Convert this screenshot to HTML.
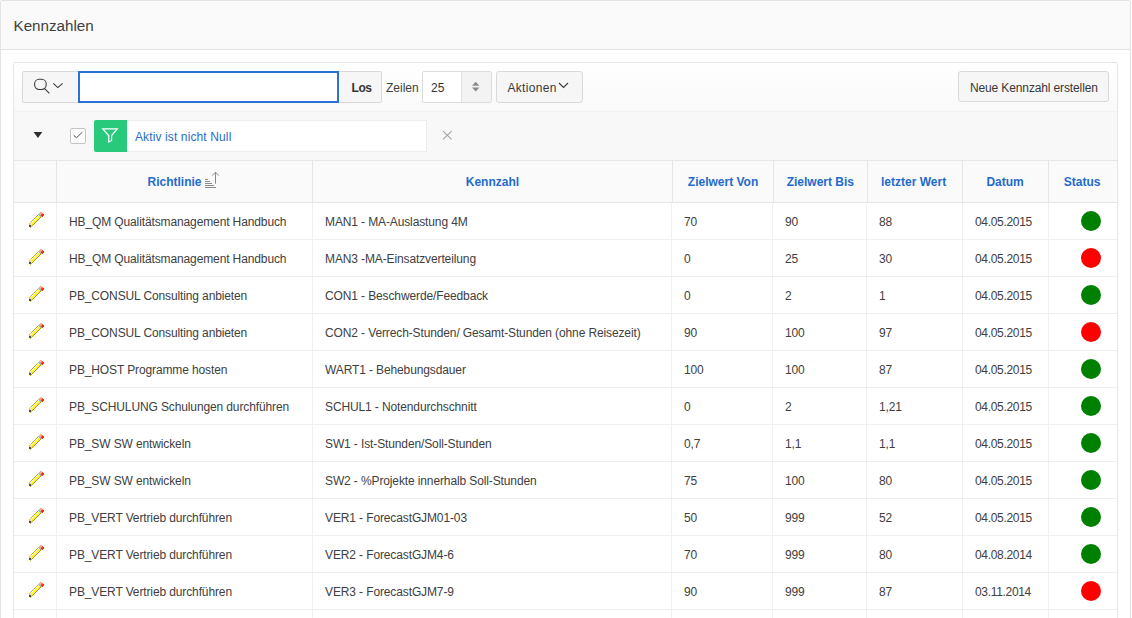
<!DOCTYPE html>
<html><head><meta charset="utf-8"><style>
html,body{margin:0;padding:0;}
body{width:1132px;height:618px;overflow:hidden;background:#fff;position:relative;font-family:"Liberation Sans",sans-serif;color:#404040;font-size:12px;}
.a{position:absolute;}
.t{position:absolute;white-space:nowrap;line-height:14px;}
.outer{position:absolute;left:0;top:0;width:1131px;height:700px;box-sizing:border-box;border:1px solid #e3e3e3;background:#fff;border-radius:2px;}
.rhdr{position:absolute;left:1px;top:1px;width:1129px;height:48px;background:#fafafa;border-bottom:1px solid #e3e3e3;}
.irr{position:absolute;left:13px;top:62px;width:1105px;height:700px;box-sizing:border-box;border:1px solid #e6e6e6;border-radius:2px;}
.tb{position:absolute;left:14px;top:63px;width:1103px;height:48px;background:linear-gradient(#fff,#f9f9f9);border-bottom:1px solid #f2f2f2;}
.fr{position:absolute;left:14px;top:112px;width:1103px;height:48px;background:#f8f8f8;}
.th{position:absolute;left:14px;top:160px;width:1103px;height:41px;background:#fafafa;border-top:1px solid #e6e6e6;border-bottom:1px solid #e6e6e6;}
.btn{position:absolute;box-sizing:border-box;height:32px;top:71px;background:#f6f6f6;border:1px solid #d9d9d9;border-radius:2px;}
.hl{position:absolute;font-weight:bold;color:#1f6bcc;white-space:nowrap;line-height:14px;top:175px;}
.row{position:absolute;left:14px;width:1103px;height:36px;border-bottom:1px solid #efefef;background:#fff;}
.vs{position:absolute;width:1px;background:#f0f0f0;}
.hvs{position:absolute;width:1px;background:#e6e6e6;top:161px;height:41px;}
.dot{position:absolute;width:20px;height:20px;border-radius:50%;}
.pen{position:absolute;left:29px;}
</style></head><body>
<svg width="0" height="0" style="position:absolute"><defs><symbol id="pen" viewBox="0 0 16 16"><rect x="11" y="0" width="1" height="1" fill="#f0a890"/><rect x="12" y="0" width="1" height="1" fill="#f8b098"/><rect x="10" y="1" width="1" height="1" fill="#f0a890"/><rect x="11" y="1" width="1" height="1" fill="#f8b098"/><rect x="12" y="1" width="1" height="1" fill="#f4a088"/><rect x="13" y="1" width="1" height="1" fill="#fa6848"/><rect x="9" y="2" width="1" height="1" fill="#a8b890"/><rect x="10" y="2" width="1" height="1" fill="#b0c4d0"/><rect x="11" y="2" width="1" height="1" fill="#f4a088"/><rect x="12" y="2" width="1" height="1" fill="#fa6848"/><rect x="13" y="2" width="1" height="1" fill="#ff2800"/><rect x="14" y="2" width="1" height="1" fill="#ff2000"/><rect x="8" y="3" width="1" height="1" fill="#b4b410"/><rect x="9" y="3" width="1" height="1" fill="#ffffe0"/><rect x="10" y="3" width="1" height="1" fill="#a0b8c8"/><rect x="11" y="3" width="1" height="1" fill="#98b0c0"/><rect x="12" y="3" width="1" height="1" fill="#ff2800"/><rect x="13" y="3" width="1" height="1" fill="#ff2000"/><rect x="14" y="3" width="1" height="1" fill="#f84020"/><rect x="7" y="4" width="1" height="1" fill="#b4b410"/><rect x="8" y="4" width="1" height="1" fill="#ffffe0"/><rect x="9" y="4" width="1" height="1" fill="#ffff48"/><rect x="10" y="4" width="1" height="1" fill="#fcf820"/><rect x="11" y="4" width="1" height="1" fill="#98b0a8"/><rect x="12" y="4" width="1" height="1" fill="#a0b070"/><rect x="13" y="4" width="1" height="1" fill="#f84020"/><rect x="6" y="5" width="1" height="1" fill="#b4b410"/><rect x="7" y="5" width="1" height="1" fill="#ffffe0"/><rect x="8" y="5" width="1" height="1" fill="#ffff48"/><rect x="9" y="5" width="1" height="1" fill="#fcf820"/><rect x="10" y="5" width="1" height="1" fill="#ffd898"/><rect x="11" y="5" width="1" height="1" fill="#a8a000"/><rect x="5" y="6" width="1" height="1" fill="#b4b410"/><rect x="6" y="6" width="1" height="1" fill="#ffffe0"/><rect x="7" y="6" width="1" height="1" fill="#ffff48"/><rect x="8" y="6" width="1" height="1" fill="#fcf820"/><rect x="9" y="6" width="1" height="1" fill="#ffd898"/><rect x="10" y="6" width="1" height="1" fill="#a8a000"/><rect x="4" y="7" width="1" height="1" fill="#b4b410"/><rect x="5" y="7" width="1" height="1" fill="#ffffe0"/><rect x="6" y="7" width="1" height="1" fill="#ffff48"/><rect x="7" y="7" width="1" height="1" fill="#fcf820"/><rect x="8" y="7" width="1" height="1" fill="#ffd898"/><rect x="9" y="7" width="1" height="1" fill="#a8a000"/><rect x="3" y="8" width="1" height="1" fill="#b4b410"/><rect x="4" y="8" width="1" height="1" fill="#ffffe0"/><rect x="5" y="8" width="1" height="1" fill="#ffff48"/><rect x="6" y="8" width="1" height="1" fill="#fcf820"/><rect x="7" y="8" width="1" height="1" fill="#ffd898"/><rect x="8" y="8" width="1" height="1" fill="#a8a000"/><rect x="2" y="9" width="1" height="1" fill="#b4b410"/><rect x="3" y="9" width="1" height="1" fill="#ffffe0"/><rect x="4" y="9" width="1" height="1" fill="#ffff48"/><rect x="5" y="9" width="1" height="1" fill="#fcf820"/><rect x="6" y="9" width="1" height="1" fill="#ffd898"/><rect x="7" y="9" width="1" height="1" fill="#a8a000"/><rect x="1" y="10" width="1" height="1" fill="#d0d060"/><rect x="2" y="10" width="1" height="1" fill="#ffffe0"/><rect x="3" y="10" width="1" height="1" fill="#ffff48"/><rect x="4" y="10" width="1" height="1" fill="#fcf820"/><rect x="5" y="10" width="1" height="1" fill="#ffd898"/><rect x="6" y="10" width="1" height="1" fill="#a8a000"/><rect x="0" y="11" width="1" height="1" fill="#d0d060"/><rect x="1" y="11" width="1" height="1" fill="#ffe4c0"/><rect x="2" y="11" width="1" height="1" fill="#ffdcb0"/><rect x="3" y="11" width="1" height="1" fill="#fcf820"/><rect x="4" y="11" width="1" height="1" fill="#ffd898"/><rect x="5" y="11" width="1" height="1" fill="#a8a000"/><rect x="0" y="12" width="1" height="1" fill="#c8c858"/><rect x="1" y="12" width="1" height="1" fill="#ffdcb0"/><rect x="2" y="12" width="1" height="1" fill="#ffd8a8"/><rect x="3" y="12" width="1" height="1" fill="#f0e828"/><rect x="4" y="12" width="1" height="1" fill="#a8a000"/><rect x="0" y="13" width="2" height="1" fill="#4c4c58"/><rect x="2" y="13" width="1" height="1" fill="#f0e828"/><rect x="3" y="13" width="1" height="1" fill="#b8b000"/><rect x="0" y="14" width="2" height="1" fill="#4c4c58"/><rect x="2" y="14" width="1" height="1" fill="#c8c030"/><rect x="1" y="15" width="1" height="1" fill="#c8c030"/></symbol></defs></svg>
<div class="outer"></div>
<div class="rhdr"></div>
<div class="t" style="left:13.5px;top:17px;font-size:15.2px;line-height:17px;color:#404040">Kennzahlen</div>
<div class="irr"></div>
<div class="tb"></div>
<div class="fr"></div>
<div class="th"></div>


<div class="btn" style="left:22px;width:57px;border-radius:2px 0 0 2px;"></div>
<svg class="a" style="left:33px;top:78px" width="32" height="18" viewBox="0 0 32 18">
 <rect x="1.6" y="1.3" width="11.6" height="10.1" rx="4.6" fill="none" stroke="#383838" stroke-width="1.05"/>
 <line x1="11.6" y1="10.6" x2="16.4" y2="15.4" stroke="#383838" stroke-width="1.05"/>
 <polyline points="20.3,5.3 24.8,9.6 29.6,5.3" fill="none" stroke="#383838" stroke-width="1.05"/>
</svg>
<div class="a" style="left:78px;top:71px;width:261px;height:32px;box-sizing:border-box;border:2px solid #2a72d4;background:#fff;"></div>
<div class="btn" style="left:339px;width:43px;border-left:none;border-radius:0 2px 2px 0;"></div>
<div class="t" style="left:351.5px;top:81px;font-weight:bold;color:#333;letter-spacing:-0.4px">Los</div>
<div class="t" style="left:386px;top:81px;color:#404040">Zeilen</div>
<div class="a" style="left:422px;top:71px;width:70px;height:32px;box-sizing:border-box;border:1px solid #dcdcdc;border-radius:2px;background:#fff;"></div>
<div class="a" style="left:461px;top:72px;width:29px;height:30px;border-left:1px solid #e0e0e0;background:#f3f3f3;border-radius:0 1px 1px 0;"></div>
<div class="t" style="left:431px;top:81px;color:#333">25</div>
<svg class="a" style="left:471px;top:81px" width="10" height="12" viewBox="0 0 10 12">
 <path d="M1 4.7 L4.7 0.7 L8.4 4.7 Z" fill="#8a8a8a"/><path d="M1 6.6 L4.7 10.6 L8.4 6.6 Z" fill="#8a8a8a"/>
</svg>
<div class="btn" style="left:496px;width:87px;border-radius:3px;"></div>
<div class="t" style="left:507.5px;top:81px;color:#383838;letter-spacing:0.3px">Aktionen</div>
<svg class="a" style="left:558px;top:82px" width="12" height="8" viewBox="0 0 12 8">
 <polyline points="1,1 5.5,5.5 10,1" fill="none" stroke="#383838" stroke-width="1.1"/>
</svg>
<div class="btn" style="left:958px;width:151px;height:31px;border-radius:3px;"></div>
<div class="t" style="left:970px;top:81px;color:#383838;letter-spacing:-0.13px">Neue Kennzahl erstellen</div>


<svg class="a" style="left:33px;top:131px" width="10" height="8" viewBox="0 0 10 8"><path d="M0.6 0.9 L9.3 0.9 L4.95 7 Z" fill="#303030"/></svg>
<div class="a" style="left:70px;top:128px;width:16px;height:16px;box-sizing:border-box;border:1px solid #c4c4c4;border-radius:2px;background:#fff;"></div>
<svg class="a" style="left:70px;top:128px" width="16" height="16" viewBox="0 0 16 16"><polyline points="3.6,7.3 6.5,9.7 12.3,4.2" fill="none" stroke="#463a52" stroke-width="0.95"/></svg>
<div class="a" style="left:94px;top:120px;width:33px;height:32px;background:#29c97b;border-radius:2px 0 0 2px;"></div>
<svg class="a" style="left:94px;top:120px" width="33" height="32" viewBox="0 0 33 32">
 <path d="M8.8 8.8 L23.3 8.8 L17.6 15.5 L17.6 20.5 L14.7 22 L14.7 15.5 Z" fill="none" stroke="#fff" stroke-width="1.2" stroke-linejoin="miter"/>
</svg>
<div class="a" style="left:127px;top:120px;width:300px;height:32px;box-sizing:border-box;border:1px solid #ececec;border-left:none;background:#fff;"></div>
<div class="t" style="left:135px;top:130px;color:#2a6cc8;letter-spacing:0.12px">Aktiv ist nicht Null</div>
<svg class="a" style="left:442px;top:130px" width="11" height="11" viewBox="0 0 11 11"><path d="M1 1.2 L9.6 9.4 M9.6 1.2 L1 9.4" stroke="#a4a4a4" stroke-width="1.1"/></svg>

<div class="hvs" style="left:56px"></div>
<div class="hvs" style="left:312px"></div>
<div class="hvs" style="left:672px"></div>
<div class="hvs" style="left:773px"></div>
<div class="hvs" style="left:867px"></div>
<div class="hvs" style="left:962px"></div>
<div class="hvs" style="left:1048px"></div>
<div class="hl" style="left:147.5px">Richtlinie</div>
<div class="hl" style="left:465.75px">Kennzahl</div>
<div class="hl" style="left:687.8px">Zielwert Von</div>
<div class="hl" style="left:786.65px">Zielwert Bis</div>
<div class="hl" style="left:881px">letzter Wert</div>
<div class="hl" style="left:986.4px">Datum</div>
<div class="hl" style="left:1063.75px">Status</div>
<svg class="a" style="left:204px;top:171px" width="18" height="18" viewBox="0 0 18 18">
<path d="M1 8.5h3 M1 10.5h5 M1 12.5h7 M1 14.5h9 M1 16.5h11" stroke="#8a8a8a" stroke-width="1"/>
<path d="M11.5 12.7 V1.5 M8.2 4.6 L11.5 1.2 L14.8 4.6" fill="none" stroke="#8a8a8a" stroke-width="1"/></svg>
<div class="row" style="top:203px"></div>
<div class="row" style="top:240px"></div>
<div class="row" style="top:277px"></div>
<div class="row" style="top:314px"></div>
<div class="row" style="top:351px"></div>
<div class="row" style="top:388px"></div>
<div class="row" style="top:425px"></div>
<div class="row" style="top:462px"></div>
<div class="row" style="top:499px"></div>
<div class="row" style="top:536px"></div>
<div class="row" style="top:573px"></div>
<div class="row" style="top:610px"></div>
<div class="vs" style="left:56px;top:203px;height:420px"></div>
<div class="vs" style="left:312px;top:203px;height:420px"></div>
<div class="vs" style="left:671px;top:203px;height:420px"></div>
<div class="vs" style="left:772px;top:203px;height:420px"></div>
<div class="vs" style="left:866px;top:203px;height:420px"></div>
<div class="vs" style="left:962px;top:203px;height:420px"></div>
<div class="vs" style="left:1048px;top:203px;height:420px"></div>
<svg class="pen" style="top:212px" width="16" height="16" shape-rendering="crispEdges"><use href="#pen"/></svg>
<div class="t" style="left:69px;top:215px;letter-spacing:-0.12px">HB_QM Qualitätsmanagement Handbuch</div>
<div class="t" style="left:325px;top:215px;letter-spacing:-0.12px">MAN1 - MA-Auslastung 4M</div>
<div class="t" style="left:684px;top:215px;letter-spacing:-0.12px">70</div>
<div class="t" style="left:785px;top:215px;letter-spacing:-0.12px">90</div>
<div class="t" style="left:879px;top:215px;letter-spacing:-0.12px">88</div>
<div class="t" style="left:975px;top:215px;letter-spacing:-0.32px">04.05.2015</div>
<div class="dot" style="left:1081px;top:211px;background:#008000"></div>
<svg class="pen" style="top:249px" width="16" height="16" shape-rendering="crispEdges"><use href="#pen"/></svg>
<div class="t" style="left:69px;top:252px;letter-spacing:-0.12px">HB_QM Qualitätsmanagement Handbuch</div>
<div class="t" style="left:325px;top:252px;letter-spacing:-0.12px">MAN3 -MA-Einsatzverteilung</div>
<div class="t" style="left:684px;top:252px;letter-spacing:-0.12px">0</div>
<div class="t" style="left:785px;top:252px;letter-spacing:-0.12px">25</div>
<div class="t" style="left:879px;top:252px;letter-spacing:-0.12px">30</div>
<div class="t" style="left:975px;top:252px;letter-spacing:-0.32px">04.05.2015</div>
<div class="dot" style="left:1081px;top:248px;background:#ff0000"></div>
<svg class="pen" style="top:286px" width="16" height="16" shape-rendering="crispEdges"><use href="#pen"/></svg>
<div class="t" style="left:69px;top:289px;letter-spacing:-0.12px">PB_CONSUL Consulting anbieten</div>
<div class="t" style="left:325px;top:289px;letter-spacing:-0.12px">CON1 - Beschwerde/Feedback</div>
<div class="t" style="left:684px;top:289px;letter-spacing:-0.12px">0</div>
<div class="t" style="left:785px;top:289px;letter-spacing:-0.12px">2</div>
<div class="t" style="left:879px;top:289px;letter-spacing:-0.12px">1</div>
<div class="t" style="left:975px;top:289px;letter-spacing:-0.32px">04.05.2015</div>
<div class="dot" style="left:1081px;top:285px;background:#008000"></div>
<svg class="pen" style="top:323px" width="16" height="16" shape-rendering="crispEdges"><use href="#pen"/></svg>
<div class="t" style="left:69px;top:326px;letter-spacing:-0.12px">PB_CONSUL Consulting anbieten</div>
<div class="t" style="left:325px;top:326px;letter-spacing:-0.12px">CON2 - Verrech-Stunden/ Gesamt-Stunden (ohne Reisezeit)</div>
<div class="t" style="left:684px;top:326px;letter-spacing:-0.12px">90</div>
<div class="t" style="left:785px;top:326px;letter-spacing:-0.12px">100</div>
<div class="t" style="left:879px;top:326px;letter-spacing:-0.12px">97</div>
<div class="t" style="left:975px;top:326px;letter-spacing:-0.32px">04.05.2015</div>
<div class="dot" style="left:1081px;top:322px;background:#ff0000"></div>
<svg class="pen" style="top:360px" width="16" height="16" shape-rendering="crispEdges"><use href="#pen"/></svg>
<div class="t" style="left:69px;top:363px;letter-spacing:-0.12px">PB_HOST Programme hosten</div>
<div class="t" style="left:325px;top:363px;letter-spacing:-0.12px">WART1 - Behebungsdauer</div>
<div class="t" style="left:684px;top:363px;letter-spacing:-0.12px">100</div>
<div class="t" style="left:785px;top:363px;letter-spacing:-0.12px">100</div>
<div class="t" style="left:879px;top:363px;letter-spacing:-0.12px">87</div>
<div class="t" style="left:975px;top:363px;letter-spacing:-0.32px">04.05.2015</div>
<div class="dot" style="left:1081px;top:359px;background:#008000"></div>
<svg class="pen" style="top:397px" width="16" height="16" shape-rendering="crispEdges"><use href="#pen"/></svg>
<div class="t" style="left:69px;top:400px;letter-spacing:-0.12px">PB_SCHULUNG Schulungen durchführen</div>
<div class="t" style="left:325px;top:400px;letter-spacing:-0.12px">SCHUL1 - Notendurchschnitt</div>
<div class="t" style="left:684px;top:400px;letter-spacing:-0.12px">0</div>
<div class="t" style="left:785px;top:400px;letter-spacing:-0.12px">2</div>
<div class="t" style="left:879px;top:400px;letter-spacing:-0.12px">1,21</div>
<div class="t" style="left:975px;top:400px;letter-spacing:-0.32px">04.05.2015</div>
<div class="dot" style="left:1081px;top:396px;background:#008000"></div>
<svg class="pen" style="top:434px" width="16" height="16" shape-rendering="crispEdges"><use href="#pen"/></svg>
<div class="t" style="left:69px;top:437px;letter-spacing:-0.12px">PB_SW SW entwickeln</div>
<div class="t" style="left:325px;top:437px;letter-spacing:-0.12px">SW1 - Ist-Stunden/Soll-Stunden</div>
<div class="t" style="left:684px;top:437px;letter-spacing:-0.12px">0,7</div>
<div class="t" style="left:785px;top:437px;letter-spacing:-0.12px">1,1</div>
<div class="t" style="left:879px;top:437px;letter-spacing:-0.12px">1,1</div>
<div class="t" style="left:975px;top:437px;letter-spacing:-0.32px">04.05.2015</div>
<div class="dot" style="left:1081px;top:433px;background:#008000"></div>
<svg class="pen" style="top:471px" width="16" height="16" shape-rendering="crispEdges"><use href="#pen"/></svg>
<div class="t" style="left:69px;top:474px;letter-spacing:-0.12px">PB_SW SW entwickeln</div>
<div class="t" style="left:325px;top:474px;letter-spacing:-0.12px">SW2 - %Projekte innerhalb Soll-Stunden</div>
<div class="t" style="left:684px;top:474px;letter-spacing:-0.12px">75</div>
<div class="t" style="left:785px;top:474px;letter-spacing:-0.12px">100</div>
<div class="t" style="left:879px;top:474px;letter-spacing:-0.12px">80</div>
<div class="t" style="left:975px;top:474px;letter-spacing:-0.32px">04.05.2015</div>
<div class="dot" style="left:1081px;top:470px;background:#008000"></div>
<svg class="pen" style="top:508px" width="16" height="16" shape-rendering="crispEdges"><use href="#pen"/></svg>
<div class="t" style="left:69px;top:511px;letter-spacing:-0.12px">PB_VERT Vertrieb durchführen</div>
<div class="t" style="left:325px;top:511px;letter-spacing:-0.12px">VER1 - ForecastGJM01-03</div>
<div class="t" style="left:684px;top:511px;letter-spacing:-0.12px">50</div>
<div class="t" style="left:785px;top:511px;letter-spacing:-0.12px">999</div>
<div class="t" style="left:879px;top:511px;letter-spacing:-0.12px">52</div>
<div class="t" style="left:975px;top:511px;letter-spacing:-0.32px">04.05.2015</div>
<div class="dot" style="left:1081px;top:507px;background:#008000"></div>
<svg class="pen" style="top:545px" width="16" height="16" shape-rendering="crispEdges"><use href="#pen"/></svg>
<div class="t" style="left:69px;top:548px;letter-spacing:-0.12px">PB_VERT Vertrieb durchführen</div>
<div class="t" style="left:325px;top:548px;letter-spacing:-0.12px">VER2 - ForecastGJM4-6</div>
<div class="t" style="left:684px;top:548px;letter-spacing:-0.12px">70</div>
<div class="t" style="left:785px;top:548px;letter-spacing:-0.12px">999</div>
<div class="t" style="left:879px;top:548px;letter-spacing:-0.12px">80</div>
<div class="t" style="left:975px;top:548px;letter-spacing:-0.32px">04.08.2014</div>
<div class="dot" style="left:1081px;top:544px;background:#008000"></div>
<svg class="pen" style="top:582px" width="16" height="16" shape-rendering="crispEdges"><use href="#pen"/></svg>
<div class="t" style="left:69px;top:585px;letter-spacing:-0.12px">PB_VERT Vertrieb durchführen</div>
<div class="t" style="left:325px;top:585px;letter-spacing:-0.12px">VER3 - ForecastGJM7-9</div>
<div class="t" style="left:684px;top:585px;letter-spacing:-0.12px">90</div>
<div class="t" style="left:785px;top:585px;letter-spacing:-0.12px">999</div>
<div class="t" style="left:879px;top:585px;letter-spacing:-0.12px">87</div>
<div class="t" style="left:975px;top:585px;letter-spacing:-0.32px">03.11.2014</div>
<div class="dot" style="left:1081px;top:581px;background:#ff0000"></div>
<svg class="pen" style="top:619px" width="16" height="16" shape-rendering="crispEdges"><use href="#pen"/></svg>
<div class="t" style="left:69px;top:622px;letter-spacing:-0.12px">PB_VERT Vertrieb durchführen</div>
<div class="t" style="left:325px;top:622px;letter-spacing:-0.12px">VER4 - ForecastGJM10-12</div>
<div class="t" style="left:684px;top:622px;letter-spacing:-0.12px">90</div>
<div class="t" style="left:785px;top:622px;letter-spacing:-0.12px">999</div>
<div class="t" style="left:879px;top:622px;letter-spacing:-0.12px">87</div>
<div class="t" style="left:975px;top:622px;letter-spacing:-0.32px">03.11.2014</div>
<div class="dot" style="left:1081px;top:618px;background:#ff0000"></div>
</body></html>
